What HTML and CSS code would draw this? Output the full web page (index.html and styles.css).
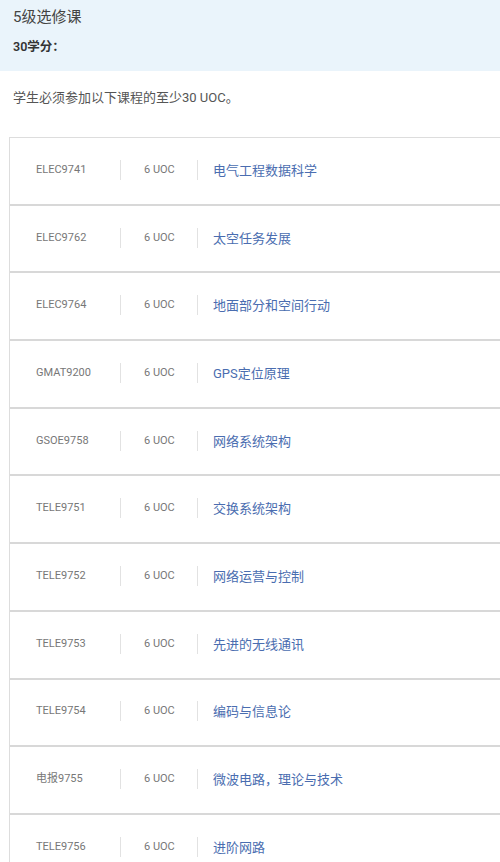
FILE: index.html
```html
<!DOCTYPE html>
<html lang="zh">
<head>
<meta charset="utf-8">
<link rel="stylesheet" href="styles.css">
</head>
<body>
<header class="band">
  <h1 class="title">5级选修课</h1>
  <p class="credits">30学分：</p>
</header>
<p class="intro">学生必须参加以下课程的至少30 UOC。</p>
<div class="table">
  <div class="row"><span class="code">ELEC9741</span><span class="uoc">6 UOC</span><span class="name">电气工程数据科学</span></div>
  <div class="row"><span class="code">ELEC9762</span><span class="uoc">6 UOC</span><span class="name">太空任务发展</span></div>
  <div class="row"><span class="code">ELEC9764</span><span class="uoc">6 UOC</span><span class="name">地面部分和空间行动</span></div>
  <div class="row"><span class="code">GMAT9200</span><span class="uoc">6 UOC</span><span class="name">GPS定位原理</span></div>
  <div class="row"><span class="code">GSOE9758</span><span class="uoc">6 UOC</span><span class="name">网络系统架构</span></div>
  <div class="row"><span class="code">TELE9751</span><span class="uoc">6 UOC</span><span class="name">交换系统架构</span></div>
  <div class="row"><span class="code">TELE9752</span><span class="uoc">6 UOC</span><span class="name">网络运营与控制</span></div>
  <div class="row"><span class="code">TELE9753</span><span class="uoc">6 UOC</span><span class="name">先进的无线通讯</span></div>
  <div class="row"><span class="code">TELE9754</span><span class="uoc">6 UOC</span><span class="name">编码与信息论</span></div>
  <div class="row"><span class="code">电报9755</span><span class="uoc">6 UOC</span><span class="name">微波电路，理论与技术</span></div>
  <div class="row"><span class="code">TELE9756</span><span class="uoc">6 UOC</span><span class="name">进阶网路</span></div>
</div>
</body>
</html>
```

FILE: styles.css
```css
html, body {
  margin: 0;
  padding: 0;
  background: #fff;
  font-family: Roboto, "Noto Sans CJK SC", sans-serif;
  color: #333;
}
.band {
  background: #eaf4fb;
  height: 71px;
  box-sizing: border-box;
  padding: 6px 13px 0;
}
.title {
  margin: 0;
  font-size: 15px;
  font-weight: 400;
  line-height: 22px;
  color: #444;
}
.credits {
  margin: 11px 0 0;
  font-size: 12.5px;
  font-weight: 600;
  line-height: 16px;
  color: #333;
}
.intro {
  margin: 0;
  padding: 18px 13px 0;
  height: 48px;
  font-size: 13px;
  line-height: 18px;
  color: #555;
}
.table {
  margin-left: 9px;
  border-top: 1px solid #ddd;
  border-left: 1px solid #ddd;
}
.row {
  display: flex;
  align-items: center;
  height: 67.7px;
  box-sizing: border-box;
  border-bottom: 2px solid #d8d8d8;
}
.code {
  width: 84px;
  padding-left: 26px;
  font-size: 11px;
  color: #777;
  line-height: 20px;
  border-right: 1px solid #e2e2e2;
  margin-top: -2px;
}
.uoc {
  width: 53px;
  padding-left: 23px;
  font-size: 11px;
  color: #777;
  line-height: 20px;
  border-right: 1px solid #e2e2e2;
  margin-top: -2px;
}
.name {
  padding-left: 15px;
  font-size: 13px;
  color: #4a6db0;
  line-height: 20px;
}
```
